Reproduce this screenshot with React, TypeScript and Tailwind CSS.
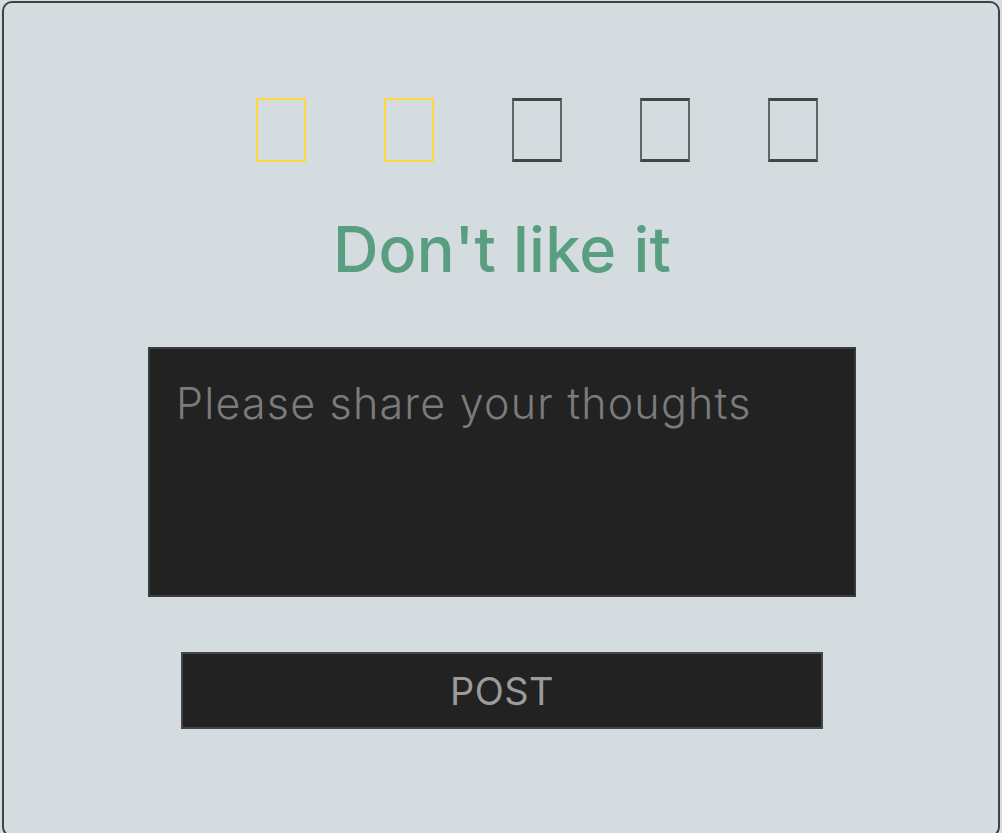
import React from "react";

const font = { fontFamily: "Inter, 'Noto Sans', sans-serif" };

function Star({ on }: { on: boolean }) {
  return on ? (
    <div className="w-[50px] h-[64px] border-2 border-[#fdd83f]" />
  ) : (
    <div className="w-[50px] h-[64px] border-y-[3px] border-x-2 border-y-[#444547] border-x-[#626466]" />
  );
}

export default function App() {
  return (
    <div className="min-h-[833px] bg-[#d5dcdf] overflow-hidden" style={font}>
      <div className="mx-[2px] mt-[1px] h-[836px] rounded-[10px] border-2 border-[#3f4144] bg-[#d5dcdf] flex flex-col items-center">
        <div className="w-full flex gap-[78px] pl-[252px] pt-[95px]">
          <Star on />
          <Star on />
          <Star on={false} />
          <Star on={false} />
          <Star on={false} />
        </div>
        <h1 className="mt-[56px] text-[63px] leading-none font-medium text-[#599e80] tracking-[0.2px] pl-[2px]">
          Don't like it
        </h1>
        <textarea
          className="mt-[66px] ml-[2px] w-[708px] h-[250px] resize-none border-2 border-[#3a3b3d] bg-[#222222] pl-[26px] pt-[28px] text-[43px] tracking-[1.2px] font-light leading-tight text-[#bbbbbb] placeholder:text-[#7b7b7b] outline-none"
          placeholder="Please share your thoughts"
        />
        <button className="mt-[55px] ml-[2px] w-[642px] h-[77px] border-2 border-[#444547] bg-[#222222] text-[38px] tracking-[0.5px] font-normal text-[#9b9b9b] leading-none">
          POST
        </button>
      </div>
    </div>
  );
}
